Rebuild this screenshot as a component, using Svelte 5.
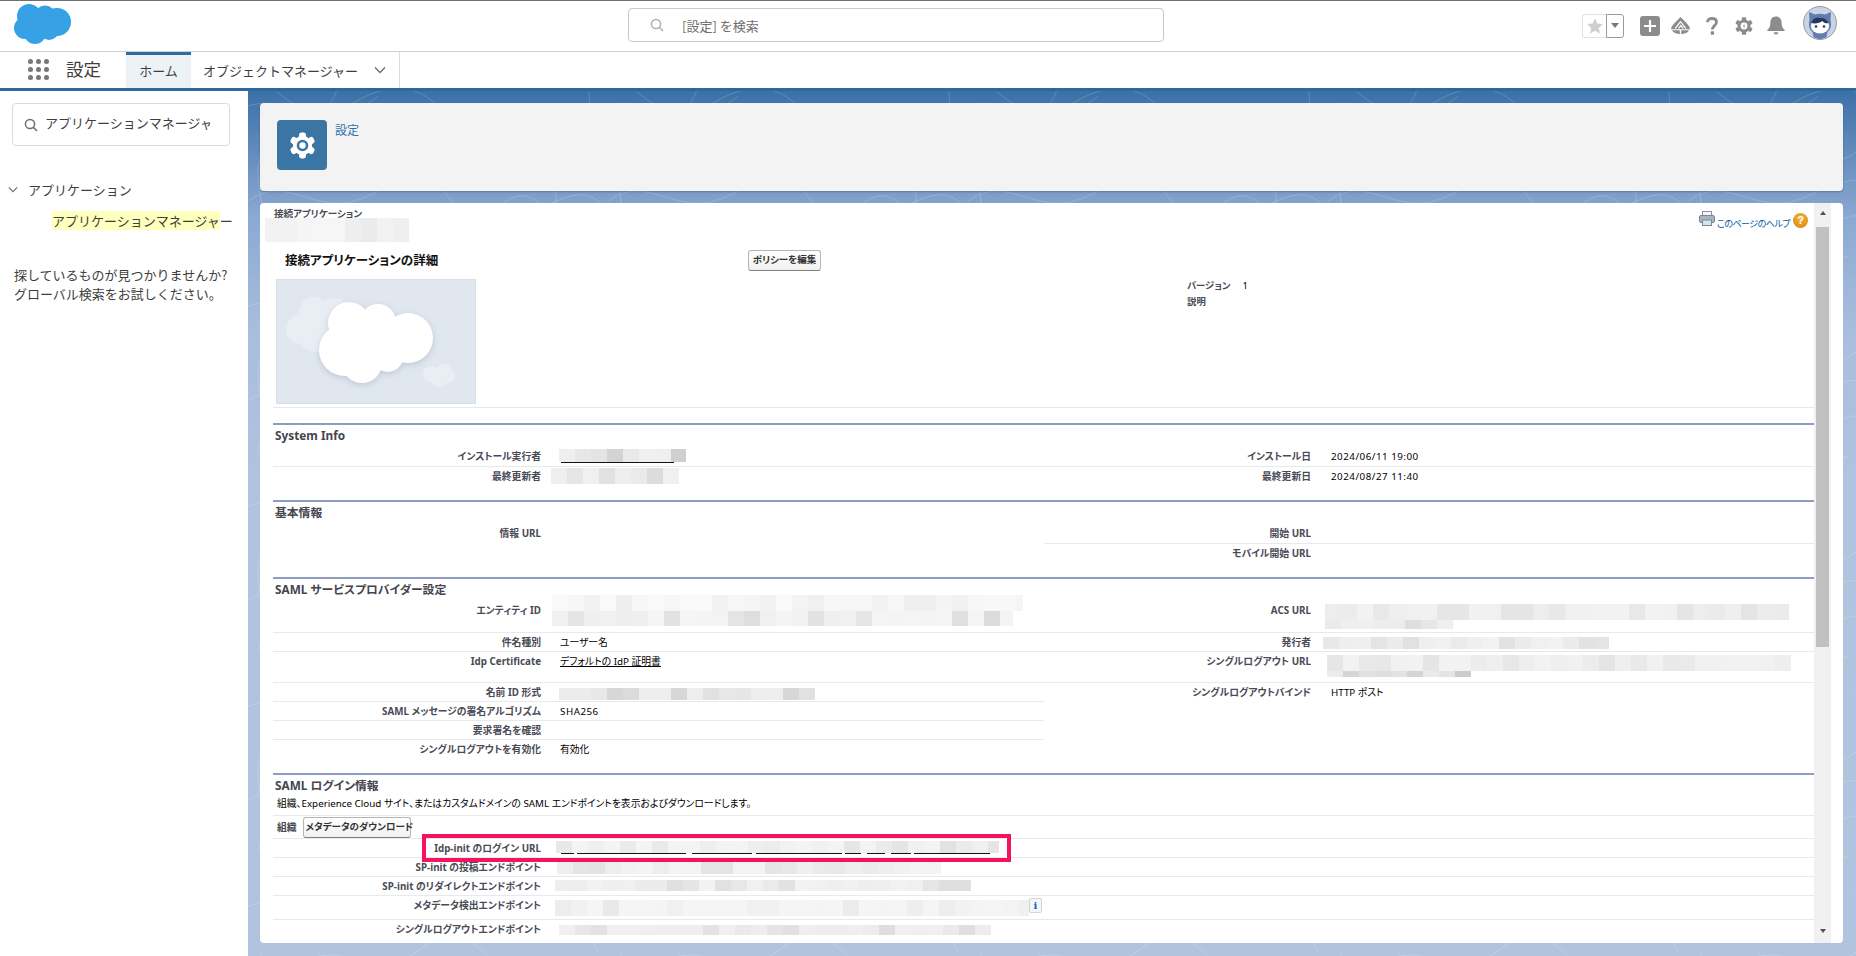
<script>
  const L = (l, v, o = {}) => ({ l, v, line: true, ...o });
  const none = { l: '', v: '', line: false };
  const sections = [
    { title: 'System Info', mb: 14, rows: [
      { h: 20, a: L('インストール実行者', ''), b: L('インストール日', '2024/06/11 19:00', { num: true }) },
      { h: 19, a: L('最終更新者', '', { line: false }), b: L('最終更新日', '2024/08/27 11:40', { line: false, num: true }) }
    ]},
    { title: '基本情報', mb: 14, rows: [
      { h: 20, a: L('情報 URL', '', { line: false }), b: L('開始 URL', '') },
      { h: 19, a: none, b: L('モバイル開始 URL', '', { line: false }) }
    ]},
    { title: 'SAML サービスプロバイダー設定', mb: 14, rows: [
      { h: 32, a: L('エンティティ ID', ''), b: L('ACS URL', '') },
      { h: 19, a: L('件名種別', 'ユーザー名'), b: L('発行者', '') },
      { h: 31, a: L('Idp Certificate', 'デフォルトの IdP 証明書', { link: true }), b: L('シングルログアウト URL', '') },
      { h: 19, a: L('名前 ID 形式', ''), b: L('シングルログアウトバインド', 'HTTP ポスト', { line: false }) },
      { h: 19, a: L('SAML メッセージの署名アルゴリズム', 'SHA256', { num: true }), b: none },
      { h: 19, a: L('要求署名を確認', ''), b: none },
      { h: 19, a: L('シングルログアウトを有効化', '有効化', { line: false }), b: none }
    ]}
  ];
  const loginRows = [
    { h: 19, l: 'Idp-init のログイン URL' },
    { h: 19, l: 'SP-init の投稿エンドポイント' },
    { h: 19, l: 'SP-init のリダイレクトエンドポイント' },
    { h: 24, l: 'メタデータ検出エンドポイント', info: true },
    { h: 23, l: 'シングルログアウトエンドポイント', noLine: true }
  ];

  // Redaction mosaics: page x, page y, width, height, seed, darkest shade, lightest shade
  const rawBars = [
    [265, 218, 144, 24, 3, 234, 246],
    [559, 449, 127, 13, 7, 203, 240],
    [551, 468, 128, 16, 11, 212, 240],
    [552, 595, 471, 16, 13, 238, 249],
    [552, 611, 461, 15, 17, 218, 245],
    [559, 688, 256, 12, 19, 214, 238],
    [1325, 604, 464, 16, 23, 228, 242],
    [1325, 620, 128, 9, 29, 222, 240],
    [1323, 637, 286, 12, 31, 222, 242],
    [1327, 655, 464, 16, 37, 228, 242],
    [1327, 671, 144, 6, 41, 204, 236],
    [556, 841, 443, 12, 43, 225, 244],
    [557, 862, 384, 12, 47, 226, 244],
    [555, 880, 416, 11, 53, 222, 242],
    [555, 900, 474, 16, 59, 233, 245],
    [559, 925, 432, 10, 61, 222, 240]
  ];
  const shade = (seed, i, min, max) => {
    const r = Math.abs(Math.sin(seed * 12.9898 + i * 78.233) * 43758.5453) % 1;
    const v = Math.round(max - (max - min) * r * r);
    return `rgb(${v},${v},${v})`;
  };
  const bars = rawBars.map(([x, y, w, h, s, min, max]) => ({
    x: x - 260, y: y - 203, w, h,
    cells: Array.from({ length: Math.ceil(w / 16) }, (_, i) => shade(s, i, min, max))
  }));
  const unders = [
    [561, 462, 113],
    [561, 853, 13], [577, 853, 109], [692, 853, 60], [756, 853, 86],
    [845, 853, 16], [867, 853, 18], [891, 853, 20], [914, 853, 76]
  ].map(([x, y, w]) => ({ x: x - 260, y: y - 203, w }));
  const topo = [
    'M-10 20C30 -5 60 40 100 15S170 -10 200 25',
    'M20 -8C50 25 95 35 130 5',
    'M210 40C230 10 255 5 275 25S300 50 325 20',
    'M225 45C240 20 255 18 268 30S290 55 315 38',
    'M340 -5C345 20 335 40 350 60',
    'M360 -5C365 25 355 45 372 70',
    'M60 70C90 50 130 90 170 60S230 50 260 90',
    'M0 110C40 80 70 130 120 105S190 85 210 120',
    'M150 130C190 110 240 150 290 120S350 105 375 140',
    'M30 165C70 140 110 190 160 165',
    'M200 180C240 160 270 200 320 175',
    'M90 -5C85 15 70 25 60 50',
    'M300 70C315 95 300 120 320 150',
    'M15 60C0 90 25 120 10 160',
    'M250 120C262 100 285 100 295 118S285 150 262 146 240 135 250 120'
  ];
  const gearLobes = [0, 60, 120, 180, 240, 300];
</script>

<div class="app">
  <header class="topbar">
    <div class="logo-cell">
      <svg class="logo" viewBox="0 0 57 40" aria-label="Salesforce">
        <g fill="#36a1e4">
          <circle cx="15" cy="12" r="12" /><circle cx="31" cy="12" r="10.5" /><circle cx="43" cy="18" r="14" />
          <circle cx="11" cy="24" r="11" /><circle cx="21" cy="29" r="11" /><circle cx="35" cy="26" r="10" />
        </g>
      </svg>
    </div>
    <div class="global-search">
      <svg class="mag" viewBox="0 0 14 14"><circle cx="6" cy="6" r="4.6" /><path d="M9.4 9.4 13 13" /></svg>
      <span>[設定] を検索</span>
    </div>
    <div class="tools">
      <div class="fav">
        <span class="fav-star">
          <svg viewBox="0 0 20 20" width="18" height="18"><path d="M10 1.500 12.600 7.200 18.800 7.900 14.200 12.100 15.500 18.300 10 15.200 4.500 18.300 5.800 12.100 1.200 7.900 7.400 7.200Z" fill="#cfcfcf" /></svg>
        </span>
        <span class="fav-arrow"><i></i></span>
      </div>
      <svg class="tool add" viewBox="0 0 20 20"><rect width="20" height="20" rx="3" fill="#8c8c8c" /><path d="M10 4v12M4 10h12" stroke="#fff" stroke-width="2.2" /></svg>
      <svg class="tool trail" viewBox="0 0 20 20">
        <path d="M10 1 16 7C19 10 20 12 20 14H0C0 12 1 10 4 7Z" fill="#8c8c8c" />
        <path d="M1 15H9L9.6 19C6 19 2.5 18 1 15ZM11 15H19C17.5 18 14 19 10.6 19Z" fill="#8c8c8c" />
        <path d="M4.5 13 10 6l5.5 7M8 13l2.4-3 2.4 3" fill="none" stroke="#fff" stroke-width="1.3" />
      </svg>
      <svg class="tool qmark" viewBox="0 0 12 18"><path d="M1.5 5.2C1.5 2.6 3.2 1.5 6 1.500s4.500 1.400 4.500 3.700c0 3.400-4.100 3.400-4.100 7.200" fill="none" stroke="#8c8c8c" stroke-width="2.800" /><circle cx="6.4" cy="16" r="1.900" fill="#8c8c8c" /></svg>
      <svg class="tool cog" viewBox="-10 -10 20 20">
        {#each gearLobes as a}
          <rect x="-2.4" y="-9.8" width="4.8" height="5" rx="1" fill="#8c8c8c" transform="rotate({a})" />
        {/each}
        <circle r="7.2" fill="#8c8c8c" /><circle r="3.8" fill="#fff" />
        <path d="M1 -3.2-1.4.5H.3L-.8 3.2 1.6-.6H-.1Z" fill="#8c8c8c" />
      </svg>
      <svg class="tool bell" viewBox="0 0 18 19"><path d="M9 0.5C5.2.5 3.4 3.4 3.4 6.6c0 4-1.2 6-3.2 7.4 0 .7.4 1 1 1h15.6c.6 0 1-.3 1-1-2-1.4-3.2-3.4-3.2-7.4C14.600 3.400 12.800.5 9 .5Z" fill="#8c8c8c" /><path d="M6.600 16.200h4.800a2.400 2.400 0 0 1-4.800 0Z" fill="#8c8c8c" /></svg>
      <svg class="avatar" viewBox="0 0 34 34">
        <circle cx="17" cy="17" r="16.5" fill="#c9d5e6" stroke="#9a9a9a" />
        <path d="M6 6l6 2.500c3-1 7-1 10 0L28 6l-.5 8c1.500 5 0 10-3 12l-1 5c-4 2-9 2-13 0l-1-5c-3-2-4.500-7-3-12Z" fill="#5f7ead" />
        <ellipse cx="17" cy="20" rx="9.200" ry="7.400" fill="#fff" />
        <path d="M8.300 17c2-5 5-5.500 8.500-5 3.500-.5 6.700.5 8.900 5-4 1-5-1-6.500-2-2 2-7 3-10.900 2Z" fill="#25385c" />
        <circle cx="13" cy="20.500" r="1.300" fill="#25385c" /><circle cx="21" cy="20.500" r="1.300" fill="#25385c" />
        <ellipse cx="17" cy="31" rx="3" ry="2" fill="#5f7ead" />
      </svg>
    </div>
  </header>

  <nav class="navbar">
    <div class="apps">
      {#each Array(9) as _}<i></i>{/each}
    </div>
    <span class="app-name">設定</span>
    <a class="tab active" href="#home">ホーム</a>
    <a class="tab" href="#om">
      オブジェクトマネージャー
      <svg class="chev" viewBox="0 0 12 8"><path d="M1 1.500 6 6.500 11 1.500" /></svg>
    </a>
  </nav>

  <div class="body">
    <aside class="sidebar">
      <div class="quickfind">
        <svg class="mag dark" viewBox="0 0 14 14"><circle cx="6" cy="6" r="4.600" /><path d="M9.400 9.400 13 13" /></svg>
        <span class="qf-text">アプリケーションマネージャー</span>
      </div>
      <div class="tree-head">
        <svg class="chev small" viewBox="0 0 12 8"><path d="M1 1.500 6 6.500 11 1.500" /></svg>
        アプリケーション
      </div>
      <div class="tree-leaf"><mark>アプリケーションマネージャ</mark>ー</div>
      <p class="hint">探しているものが見つかりませんか?<br />グローバル検索をお試しください。</p>
    </aside>

    <main class="main">
      <svg class="topo" width="100%" height="100%" aria-hidden="true">
        <defs>
          <pattern id="topo" width="360" height="200" patternUnits="userSpaceOnUse">
            {#each topo as d}<path {d} fill="none" stroke="#fff" stroke-opacity=".16" stroke-width="1" />{/each}
          </pattern>
        </defs>
        <rect width="100%" height="100%" fill="url(#topo)" />
      </svg>

      <section class="setup-head">
        <div class="setup-icon">
          <svg viewBox="-14 -14 28 28" width="27" height="27">
            {#each gearLobes as a}
              <rect x="-3.600" y="-13.500" width="7.200" height="7" rx="2.500" fill="#fff" transform="rotate({a})" />
            {/each}
            <circle r="10" fill="#fff" /><circle r="6" fill="#3a75a3" /><circle r="3.300" fill="#fff" />
          </svg>
        </div>
        <a class="crumb-link" href="#setup">設定</a>
      </section>

      <section class="panel">
        <div class="content">
          <div class="crumb">接続アプリケーション</div>
          <div class="detail-row">
            <h2>接続アプリケーションの詳細</h2>
            <button class="btn">ポリシーを編集</button>
          </div>
          <div class="media-row">
            <svg class="cloud-art" viewBox="0 0 200 125">
              <rect x=".5" y=".5" width="199" height="124" fill="#e0e7ef" stroke="#d8dfe8" />
              <g fill="#e9eef4">
                <circle cx="38" cy="33" r="15" /><circle cx="58" cy="34" r="15" /><circle cx="25" cy="50" r="15" /><circle cx="75" cy="42" r="14" /><circle cx="40" cy="55" r="18" />
                <circle cx="155" cy="95" r="8" /><circle cx="168" cy="93" r="8" /><circle cx="163" cy="100" r="8" /><circle cx="172" cy="97" r="7" />
              </g>
              <g fill="#fff" class="cloud-main">
                <circle cx="73" cy="44" r="21" /><circle cx="102" cy="43" r="18" /><circle cx="132" cy="59" r="25" />
                <circle cx="69" cy="71" r="26" /><circle cx="86" cy="84" r="20" /><circle cx="112" cy="78" r="15" /><circle cx="100" cy="60" r="25" />
              </g>
            </svg>
            <div class="version">
              <div><b>バージョン</b><span>1</span></div>
              <div><b>説明</b></div>
            </div>
          </div>
          <hr class="rule" />

          {#each sections as s}
            <div class="sec" style="margin-bottom:{s.mb}px">
              <h3>{s.title}</h3>
              {#each s.rows as r}
                <div class="pair" style="height:{r.h}px">
                  {#each [r.a, r.b] as c}
                    <div class="cell" class:line={c.line}>
                      <span class="lab">{c.l}</span>
                      <span class="val" class:link={c.link} class:num={c.num}>{c.v}</span>
                    </div>
                  {/each}
                </div>
              {/each}
            </div>
          {/each}

          <div class="sec">
            <h3>SAML ログイン情報</h3>
            <div class="desc">組織、Experience Cloud サイト、またはカスタムドメインの SAML エンドポイントを表示およびダウンロードします。</div>
            <div class="org"><b>組織</b><button class="btn">メタデータのダウンロード</button></div>
            {#each loginRows as r}
              <div class="cell full" class:line={!r.noLine} style="height:{r.h}px">
                <span class="lab">{r.l}</span>
                <span class="val">{#if r.info}<i class="info">i</i>{/if}</span>
              </div>
            {/each}
          </div>

          {#each bars as b}
            <div class="mosaic" style="left:{b.x}px;top:{b.y}px;width:{b.w}px;height:{b.h}px">
              {#each b.cells as c}<i style="background:{c}"></i>{/each}
            </div>
          {/each}
          {#each unders as u}
            <i class="under" style="left:{u.x}px;top:{u.y}px;width:{u.w}px"></i>
          {/each}
          <div class="callout"></div>

          <div class="help-row">
            <svg class="printer" viewBox="0 0 16 15">
              <rect x="3.500" y=".5" width="9" height="5" fill="#f4f6f8" stroke="#8a96a3" />
              <rect x=".5" y="4.500" width="15" height="7" rx="1.500" fill="#aab4bf" stroke="#7d8894" />
              <rect x="3.500" y="9" width="9" height="5.500" fill="#cfe6f5" stroke="#7d8894" />
            </svg>
            <a href="#help">このページのヘルプ</a>
            <span class="q">?</span>
          </div>
        </div>
        <div class="scroll">
          <div class="sb-up"><i></i></div>
          <div class="sb-thumb"></div>
          <div class="sb-down"><i></i></div>
        </div>
      </section>
    </main>
  </div>
</div>

<style>
  :global(body) { margin: 0; background: #fff; }
  .app { width: 1856px; height: 956px; display: flex; flex-direction: column; overflow: hidden; font-family: "Noto Sans CJK JP", "Liberation Sans", sans-serif; color: #3e3e3c; font-size: 13px; }

  .topbar { border-top: 1px solid #6f6f6f; display: grid; grid-template-columns: 628px 536px 1fr; align-items: center; border-bottom: 1px solid #d0d0d0; height: 50px; background: #fff; }
  .logo-cell { padding-left: 14px; display: flex; align-items: center; height: 100%; }
  .logo { width: 57px; height: 40px; margin-bottom: 5px; }
  .global-search { height: 32px; border: 1px solid #c9c9c9; border-radius: 4px; display: flex; align-items: center; margin-bottom: 3px; color: #706e6b; font-size: 13px; }
  .global-search span { position: relative; top: 1px; }
  .mag { width: 14px; height: 14px; margin-left: 21px; margin-right: 18px; fill: none; stroke: #b0b0b0; stroke-width: 1.500; }
  .mag.dark { stroke: #706e6b; margin-left: 11px; margin-right: 8px; }
  .tools { display: flex; align-items: center; justify-content: flex-end; padding-right: 19px; height: 100%; }
  .fav { display: flex; width: 42px; height: 24px; margin-right: 16px; margin-bottom: 1px; }
  .fav-star { width: 24px; box-sizing: border-box; border: 1px solid #e2e2e2; border-right: 0; border-radius: 3px 0 0 3px; display: flex; align-items: center; justify-content: center; }
  .fav-arrow { width: 18px; box-sizing: border-box; border: 1px solid #9a9a9a; border-radius: 0 3px 3px 0; display: flex; align-items: center; justify-content: center; }
  .fav-arrow i { border: 4.500px solid transparent; border-top: 5px solid #7a7a7a; border-bottom: 0; }
  .tool { display: block; flex: none; margin-bottom: 1px; }
  .add { width: 20px; height: 20px; margin-right: 11px; }
  .trail { width: 19px; height: 19px; margin-right: 16px; }
  .qmark { width: 12px; height: 18px; margin-right: 17px; }
  .cog { width: 18px; height: 18px; margin-right: 14px; }
  .bell { width: 18px; height: 19px; margin-right: 18px; }
  .avatar { width: 34px; height: 34px; margin-bottom: 6px; }

  .navbar { height: 36px; display: flex; align-items: stretch; background: #fff; }
  .apps { width: 21px; height: 21px; margin: 7px 0 0 28px; display: grid; grid-template-columns: repeat(3, 5px); gap: 3px; }
  .apps i { width: 5px; height: 5px; border-radius: 50%; background: #777; }
  .app-name { margin-left: 17px; width: 60px; font-size: 17.500px; line-height: 33px; color: #3e3e3c; }
  .tab { display: flex; align-items: center; padding: 0 12px; color: #3e3e3c; text-decoration: none; border-right: 1px solid #dcdcdc; font-size: 13px; white-space: nowrap; }
  .tab.active { width: 65px; box-sizing: border-box; justify-content: center; padding: 0 0 2px; background: #edf2f6; border-top: 3px solid #2e6c9f; border-right: 0; }
  .tab:not(.active) { width: 209px; box-sizing: border-box; }
  .chev { width: 12px; height: 8px; margin-left: 16px; fill: none; stroke: #706e6b; stroke-width: 1.400; }
  .chev.small { width: 10px; height: 7px; margin: 0 10px 0 0; }

  .body { flex: 1; display: flex; min-height: 0; border-top: 3px solid #2c699e; }
  .sidebar { width: 248px; flex: none; background: #fff; box-sizing: border-box; padding-top: 12px; }
  .quickfind { margin-left: 12px; width: 218px; height: 43px; box-sizing: border-box; border: 1px solid #dddbda; border-radius: 4px; display: flex; align-items: center; overflow: hidden; }
  .qf-text { width: 165px; overflow: hidden; white-space: nowrap; color: #3e3e3c; font-size: 13px; flex: none; position: relative; top: -2px; margin-left: -1px; }
  .tree-head { margin: 33px 0 0 8px; height: 20px; display: flex; align-items: center; font-size: 13px; }
  .tree-leaf { margin: 13px 0 0 52px; white-space: nowrap; font-size: 13px; line-height: 18px; }
  .tree-leaf mark { background: #ffffbe; color: inherit; }
  .hint { margin: 35px 0 0 14px; font-size: 13px; line-height: 19px; white-space: nowrap; }

  .main { flex: 1; position: relative; min-width: 0; padding: 12px 13px 13px 12px; box-sizing: border-box; display: flex; flex-direction: column; gap: 12px; background: linear-gradient(#3b70a8 0, #7c9dc9 100px, #8aa8d1 125px, #a9bedd 240px, #b1c4df 420px); }
  .topo { position: absolute; inset: 0; pointer-events: none; }
  .setup-head { position: relative; height: 88px; flex: none; box-sizing: border-box; background: #f3f3f3; border-radius: 4px; box-shadow: 0 1px 2px rgba(60,70,90,.45); display: flex; padding: 17px 0 0 17px; }
  .setup-icon { width: 50px; height: 50px; background: #3a75a3; border-radius: 4px; display: flex; align-items: center; justify-content: center; }
  .crumb-link { margin-left: 8px; font-size: 12px; line-height: 20px; color: #2f73a8; text-decoration: none; }

  .panel { position: relative; flex: 1; min-height: 0; background: #fff; border-radius: 4px; display: flex; overflow: hidden; padding-right: 12px; }
  .content { position: relative; flex: 1; min-width: 0; padding-left: 13px; overflow: hidden; font-family: "Noto Sans", "Noto Sans CJK JP", sans-serif; font-feature-settings: "palt"; color: #000; }
  .crumb { height: 15px; padding-top: 4px; box-sizing: border-box; font-size: 9.500px; line-height: 14px; font-weight: 700; color: #4a4a56; white-space: nowrap; margin-left: 1px; }
  .detail-row { margin-top: 31px; height: 21px; display: grid; grid-template-columns: 475px auto; justify-content: start; align-items: center; }
  h2 { margin: 2px 0 0 12px; font-size: 12.500px; font-weight: 700; color: #111; white-space: nowrap; line-height: 20px; }
  .btn { font: 700 9.500px/1 "Noto Sans", "Noto Sans CJK JP", sans-serif; font-feature-settings: "palt"; color: #333; background: linear-gradient(#fff, #f0f0f0); border: 1px solid #b5b5b5; border-bottom-color: #7f7f7f; border-radius: 3px; height: 21px; padding: 0 2px; white-space: nowrap; }
  .detail-row .btn { width: 73px; }
  .media-row { margin: 9px 0 0 3px; display: grid; grid-template-columns: 911px auto; height: 125px; }
  .cloud-art { width: 200px; height: 125px; display: block; }
  .cloud-main { filter: drop-shadow(0 2px 3px rgba(90,110,140,.25)); }
  .version { font-size: 9.400px; line-height: 15.500px; margin-top: -1px; color: #000; }
  .version b { color: #4a4a56; margin-right: 12px; }
  .rule { margin: 3px 0 15px; border: 0; border-top: 1px solid #e6e8ea; }

  .sec { border-top: 2px solid #8e9dbf; }
  h3 { margin: 0; height: 22px; padding-left: 2px; font-size: 11.800px; line-height: 20px; font-weight: 700; color: #45454f; white-space: nowrap; box-sizing: border-box; }
  .pair { display: grid; grid-template-columns: 771px 770px; grid-template-rows: 100%; }
  .cell { display: grid; grid-template-columns: 268px 1fr; grid-template-rows: 18px; column-gap: 19px; box-sizing: border-box; font-size: 9.800px; }
  .pair .cell:nth-child(2) { grid-template-columns: 267px 1fr; column-gap: 20px; }
  .cell.line { border-bottom: 1px solid #e8e9eb; }
  .lab { text-align: right; font-weight: 700; color: #4a4a56; white-space: nowrap; line-height: 20px; }
  .val { white-space: nowrap; color: #000; line-height: 20px; }
  .val.num { letter-spacing: .5px; }
  .val.link { text-decoration: underline; }
  .desc { height: 19px; box-sizing: border-box; border-bottom: 1px solid #e8e9eb; padding-left: 4px; font-size: 9.800px; line-height: 14px; white-space: nowrap; color: #000; }
  .org { height: 23px; box-sizing: border-box; border-bottom: 1px solid #e8e9eb; display: flex; align-items: center; padding-left: 4px; font-size: 9.800px; color: #4a4a56; }
  .org .btn { margin-left: 6px; height: 21px; width: 108px; }
  .full { width: 100%; }
  .info { display: inline-block; position: relative; z-index: 2; margin: 2px 0 0 469px; width: 13px; height: 15px; box-sizing: border-box; border: 1px solid #d5d5d5; border-radius: 2px; background: #f5f6f8; color: #1a5fb4; font: 700 10px/13px "DejaVu Serif", serif; text-align: center; }

  .mosaic { position: absolute; display: flex; overflow: hidden; }
  .mosaic i { flex: none; width: 16px; height: 100%; }
  .under { position: absolute; height: 1px; background: #111; z-index: 2; }
  .callout { position: absolute; left: 162px; top: 631px; width: 589px; height: 28px; box-sizing: border-box; border: 4px solid #f5125f; z-index: 3; }

  .help-row { position: absolute; right: 6px; top: 8px; display: flex; align-items: flex-end; }
  .printer { width: 16px; height: 15px; margin-right: 2px; }
  .help-row a { font-size: 9px; letter-spacing: -.5px; line-height: 14px; color: #015ba7; white-space: nowrap; width: 70px; text-decoration: none; margin-bottom: -5px; }
  .q { width: 15px; height: 15px; border-radius: 50%; margin-left: 6px; margin-bottom: -2px; background: radial-gradient(circle at 50% 35%, #f5b53a, #d97f08); color: #fff; font: 700 11px/15px "Liberation Sans", sans-serif; text-align: center; }

  .scroll { width: 17px; flex: none; background: #f1f1f1; display: flex; flex-direction: column; align-items: center; }
  .sb-up { height: 24px; flex: none; width: 100%; display: flex; justify-content: center; padding-top: 8px; box-sizing: border-box; }
  .sb-up i { border: 3.500px solid transparent; border-bottom: 4px solid #505050; border-top: 0; height: 0; }
  .sb-thumb { width: 13px; height: 420px; background: #c1c1c1; flex: none; }
  .sb-down { margin-top: auto; height: 14px; flex: none; width: 100%; display: flex; justify-content: center; box-sizing: border-box; }
  .sb-down i { border: 3.500px solid transparent; border-top: 4px solid #505050; border-bottom: 0; height: 0; }
</style>
